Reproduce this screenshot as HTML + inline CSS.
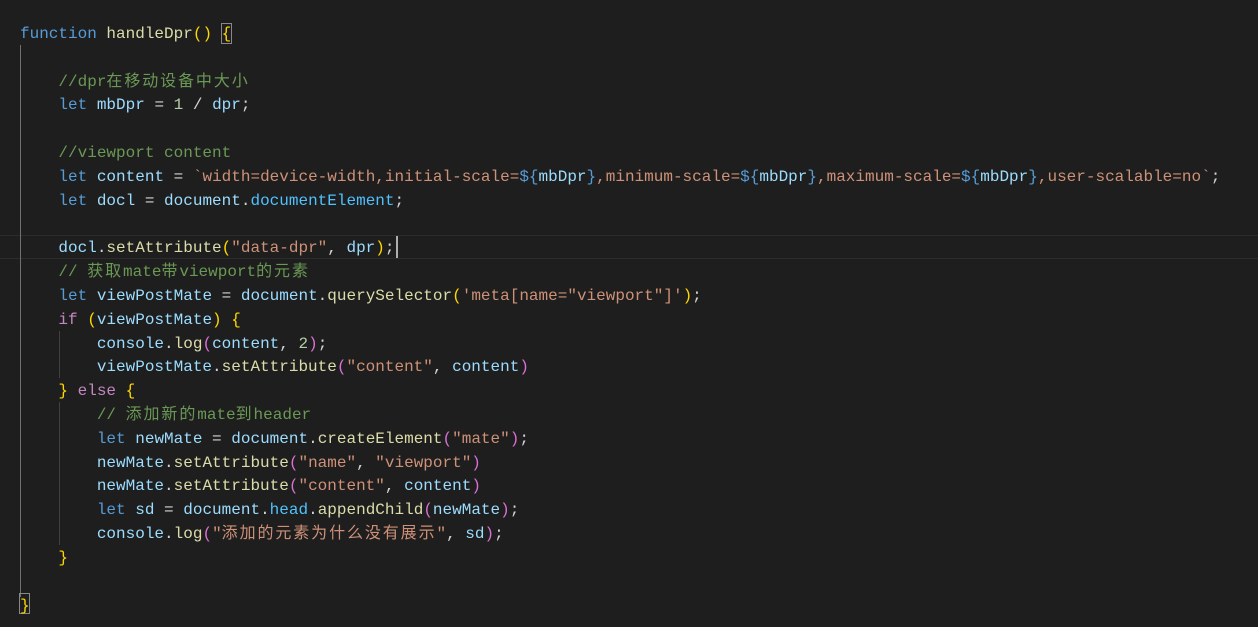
<!DOCTYPE html>
<html><head><meta charset="utf-8"><style>
html,body{margin:0;padding:0;background:#1e1e1e;width:1258px;height:627px;overflow:hidden}
pre{position:absolute;left:20px;top:23px;margin:0;font-family:"Liberation Mono","Noto Sans CJK SC",monospace;font-size:16px;line-height:23.82px;color:#d4d4d4;white-space:pre}
.k{color:#569cd6}.f{color:#dcdcaa}.v{color:#9cdcfe}.s{color:#ce9178}.c{color:#6a9955}.n{color:#b5cea8}.p{color:#c586c0}.y{color:#ffd700}.m{color:#da70d6}.b{color:#179fff}.cn{color:#4fc1ff}
.z{font-family:"Noto Sans CJK SC",sans-serif;letter-spacing:1.9px;line-height:0}
.box{position:absolute;border:1px solid #888;box-sizing:border-box}
</style></head><body>
<div style="position:absolute;left:0;top:235px;width:1258px;height:24px;border-top:1px solid #2c2c2c;border-bottom:1px solid #2c2c2c;box-sizing:border-box"></div>
<div style="position:absolute;left:20px;top:45px;width:1px;height:552px;background:#707070"></div>
<div style="position:absolute;left:59px;top:331px;width:1px;height:47px;background:#404040"></div>
<div style="position:absolute;left:59px;top:402px;width:1px;height:143px;background:#404040"></div>
<div class="box" style="left:221px;top:23px;width:11px;height:21px"></div>
<div class="box" style="left:19px;top:593px;width:11px;height:21px"></div>
<div style="position:absolute;left:396px;top:236px;width:2px;height:22px;background:#aeafad"></div>
<pre><span class="k">function</span> <span class="f">handleDpr</span><span class="y">()</span> <span class="y">{</span>

    <span class="c">//dpr<span class="z">在移动设备中大小</span></span>
    <span class="k">let</span> <span class="v">mbDpr</span> = <span class="n">1</span> / <span class="v">dpr</span>;

    <span class="c">//viewport content</span>
    <span class="k">let</span> <span class="v">content</span> = <span class="s">`width=device-width,initial-scale=</span><span class="k">${</span><span class="v">mbDpr</span><span class="k">}</span><span class="s">,minimum-scale=</span><span class="k">${</span><span class="v">mbDpr</span><span class="k">}</span><span class="s">,maximum-scale=</span><span class="k">${</span><span class="v">mbDpr</span><span class="k">}</span><span class="s">,user-scalable=no`</span>;
    <span class="k">let</span> <span class="v">docl</span> = <span class="v">document</span>.<span class="cn">documentElement</span>;

    <span class="v">docl</span>.<span class="f">setAttribute</span><span class="y">(</span><span class="s">"data-dpr"</span>, <span class="v">dpr</span><span class="y">)</span>;
    <span class="c">// <span class="z">获取</span>mate<span class="z">带</span>viewport<span class="z">的元素</span></span>
    <span class="k">let</span> <span class="v">viewPostMate</span> = <span class="v">document</span>.<span class="f">querySelector</span><span class="y">(</span><span class="s">'meta[name="viewport"]'</span><span class="y">)</span>;
    <span class="p">if</span> <span class="y">(</span><span class="v">viewPostMate</span><span class="y">)</span> <span class="y">{</span>
        <span class="v">console</span>.<span class="f">log</span><span class="m">(</span><span class="v">content</span>, <span class="n">2</span><span class="m">)</span>;
        <span class="v">viewPostMate</span>.<span class="f">setAttribute</span><span class="m">(</span><span class="s">"content"</span>, <span class="v">content</span><span class="m">)</span>
    <span class="y">}</span> <span class="p">else</span> <span class="y">{</span>
        <span class="c">// <span class="z">添加新的</span>mate<span class="z">到</span>header</span>
        <span class="k">let</span> <span class="v">newMate</span> = <span class="v">document</span>.<span class="f">createElement</span><span class="m">(</span><span class="s">"mate"</span><span class="m">)</span>;
        <span class="v">newMate</span>.<span class="f">setAttribute</span><span class="m">(</span><span class="s">"name"</span>, <span class="s">"viewport"</span><span class="m">)</span>
        <span class="v">newMate</span>.<span class="f">setAttribute</span><span class="m">(</span><span class="s">"content"</span>, <span class="v">content</span><span class="m">)</span>
        <span class="k">let</span> <span class="v">sd</span> = <span class="v">document</span>.<span class="cn">head</span>.<span class="f">appendChild</span><span class="m">(</span><span class="v">newMate</span><span class="m">)</span>;
        <span class="v">console</span>.<span class="f">log</span><span class="m">(</span><span class="s">"<span class="z">添加的元素为什么没有展示</span>"</span>, <span class="v">sd</span><span class="m">)</span>;
    <span class="y">}</span>

<span class="y">}</span></pre>
</body></html>
